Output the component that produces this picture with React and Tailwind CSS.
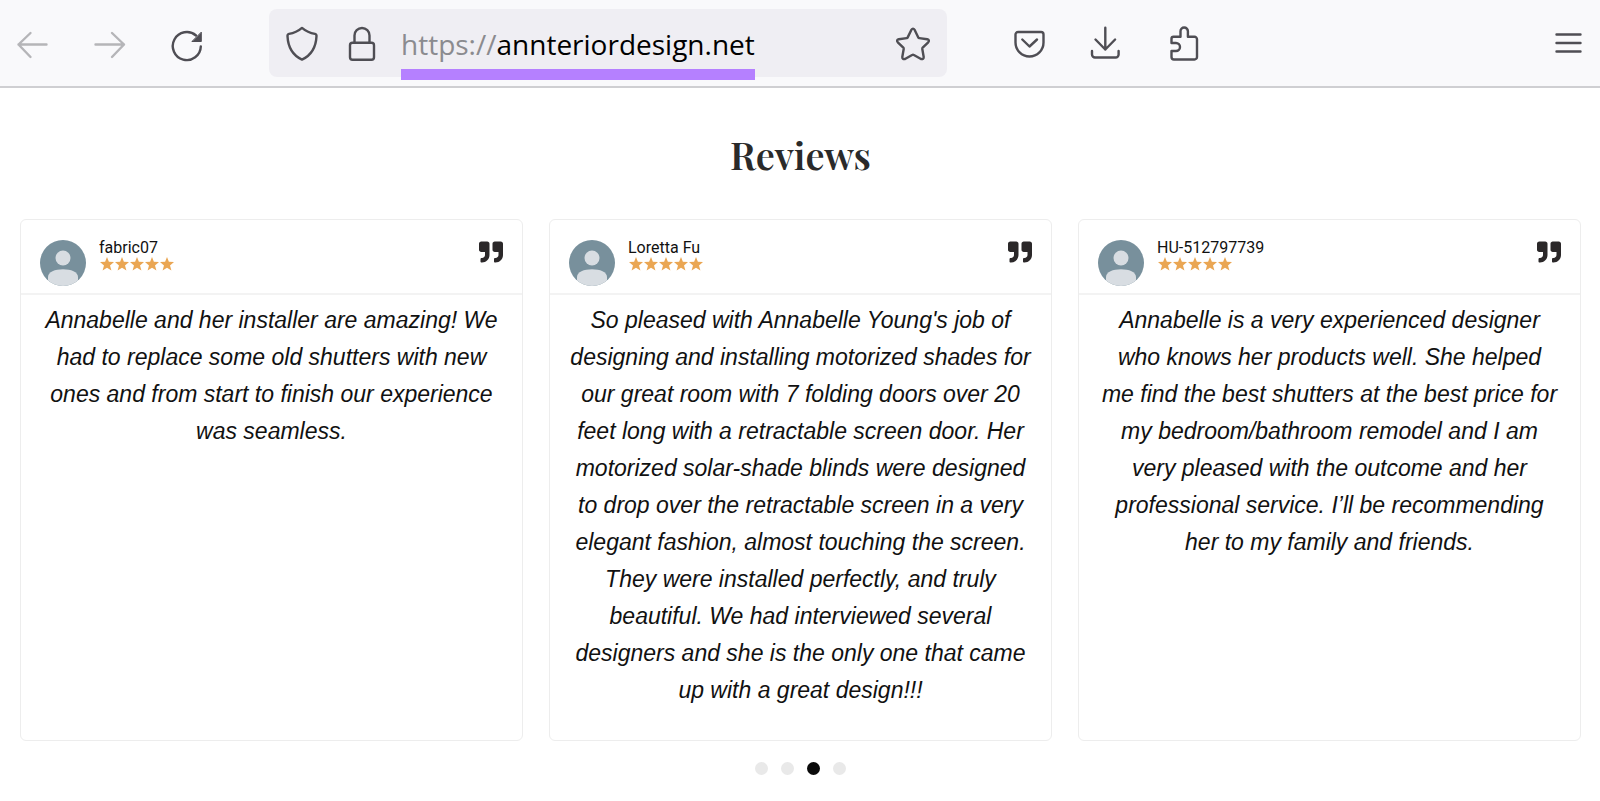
import React from "react";
import { FaQuoteRight } from "react-icons/fa";

const reviews = [
  {
    name: "fabric07",
    text: "Annabelle and her installer are amazing! We had to replace some old shutters with new ones and from start to finish our experience was seamless.",
  },
  {
    name: "Loretta Fu",
    text: "So pleased with Annabelle Young's job of designing and installing motorized shades for our great room with 7 folding doors over 20 feet long with a retractable screen door. Her motorized solar-shade blinds were designed to drop over the retractable screen in a very elegant fashion, almost touching the screen. They were installed perfectly, and truly beautiful. We had interviewed several designers and she is the only one that came up with a great design!!!",
  },
  {
    name: "HU-512797739",
    text: "Annabelle is a very experienced designer who knows her products well. She helped me\u00a0find the best shutters at the best price for my bedroom/bathroom remodel and I am very pleased with the outcome and her professional service. I’ll be recommending her to my family and friends.",
  },
];

function IconButton({ label, className = "text-[#4f4e54]", children }) {
  return (
    <button type="button" aria-label={label} className={"size-8 shrink-0 " + className}>
      <svg
        viewBox="0 0 32 32"
        className="size-8 overflow-visible"
        fill="none"
        stroke="currentColor"
        strokeWidth="2.4"
        strokeLinecap="round"
        strokeLinejoin="round"
        aria-hidden="true"
      >
        {children}
      </svg>
    </button>
  );
}

function Toolbar() {
  return (
    <header className="flex items-center border-b-2 border-[#cfcfd2] bg-[#f9f9fb] px-4 py-[9px]">
      <nav className="flex gap-[45px]" aria-label="History">
        <IconButton label="Back" className="text-[#b5b5b8]">
          <path d="M30.500 17.500H2.500M14.500 6 2.500 17.500 14.500 30" />
        </IconButton>
        <IconButton label="Forward" className="text-[#b5b5b8]">
          <path d="M2.500 17.500H31M19 6 31 17.500 19 30" />
        </IconButton>
        <IconButton label="Reload">
          <path d="M30.800 19.500A14 14 0 1 1 26 8.500" />
          <path d="M31.300 5.500v9h-9z" fill="currentColor" strokeWidth="1" />
        </IconButton>
      </nav>

      <div className="mx-[67px] flex h-[68px] w-[678px] items-center rounded-lg bg-[#efeef3] pr-[18px] pl-[17px]">
        <IconButton label="Tracking protection">
          <path d="M16 .9C12.500 3.900 8 6.100 3 6.900Q1.400 7.300 1.500 9.100C2 19.600 6.300 28.100 16 32.600C25.700 28.100 30 19.600 30.500 9.100Q30.600 7.300 29 6.900C24 6.100 19.500 3.900 16 .9Z" />
        </IconButton>
        <IconButton label="Site security" className="ml-7 text-[#4f4e54]">
          <rect x="4" y="15.700" width="24" height="17" rx="2.500" />
          <path d="M8.500 15.500V8.500a7.500 7.500 0 0 1 15 0v7" />
        </IconButton>
        <div className="relative ml-[23px] flex h-full items-center pt-0.5">
          <a
            href="https://annteriordesign.net"
            className="font-['Open_Sans',sans-serif] text-[28px] leading-9 whitespace-nowrap text-black"
          >
            <span className="text-[#8b8b8f]">https://</span>annteriordesign.net
          </a>
          <span className="absolute inset-x-0 -bottom-[3px] h-[11px] bg-[#b580ff]" />
        </div>
        <IconButton label="Bookmark this page" className="ml-auto text-[#4f4e54]">
          <path d="M14.300 2.900Q16 .4 17.700 2.900L21.300 10.400Q21.600 11 22.300 11.100L30.200 12.200Q33 13 31.200 15.300L25.700 20.700Q25.200 21.200 25.300 22L26.700 30Q26.700 32.700 24 32L16.900 28Q16 27.600 15.100 28L8 32Q5.300 32.700 5.300 30L6.700 22Q6.800 21.200 6.300 20.700L.8 15.300Q-1 13 1.800 12.200L9.700 11.100Q10.400 11 10.700 10.400Z" />
        </IconButton>
      </div>

      <div className="flex gap-11">
        <IconButton label="Save to Pocket">
          <path d="M4 5h23a2.500 2.500 0 0 1 2.500 2.500V15.500a14 14 0 0 1-28 0V7.500A2.500 2.500 0 0 1 4 5Z" />
          <path d="M8.300 12.500 15.500 19.500l7.500-7" />
        </IconButton>
        <IconButton label="Downloads">
          <path d="M15.300 .8V22.500M5.500 12.500l9.800 10 9.800-10M2 24v3.500a3 3 0 0 0 3 3h20.600a3 3 0 0 0 3-3V24" />
        </IconButton>
        <IconButton label="Extensions">
          <path d="M7.500 9.800H14.500V4.200a3.700 3.700 0 0 1 7.400 0V9.800H28.500a2.500 2.500 0 0 1 2.500 2.500V30a2.500 2.500 0 0 1-2.500 2.500H8A2.500 2.500 0 0 1 5.500 30V24H10a4 4 0 0 0 0-8H5.500V11.800a2 2 0 0 1 2-2Z" />
        </IconButton>
      </div>

      <IconButton label="Open menu" className="ml-auto text-[#4f4e54]">
        <path d="M4.500 7.500h24M4.500 16h24M4.500 24.500h24" />
      </IconButton>
    </header>
  );
}

function Avatar() {
  return (
    <svg viewBox="0 0 46 46" className="size-[46px] shrink-0" aria-hidden="true">
      <defs>
        <clipPath id="avatar-clip">
          <circle cx="23" cy="23" r="23" />
        </clipPath>
      </defs>
      <g clipPath="url(#avatar-clip)">
        <rect width="46" height="46" fill="#78909c" />
        <circle cx="23" cy="18" r="7.500" fill="#d8dde2" />
        <path d="M8 46V37C8 32 15 29.300 23 29.300S38 32 38 37V46Z" fill="#d8dde2" />
      </g>
    </svg>
  );
}

function Stars() {
  return (
    <div className="flex gap-px pt-px pl-px" role="img" aria-label="5 out of 5 stars">
      {[0, 1, 2, 3, 4].map((i) => (
        <svg key={i} viewBox="0 0 20 20" className="size-[14px]" fill="#eaa653" aria-hidden="true">
          <path d="M10 0l2.700 6.900 7.300.4-5.700 4.700 2 7.300-6.300-4.100-6.300 4.100 2-7.300L0 7.300l7.300-.4z" />
        </svg>
      ))}
    </div>
  );
}

function ReviewCard({ name, text }) {
  return (
    <article className="flex min-h-[522px] flex-col rounded-md border border-[#ededed] bg-white">
      <div className="flex items-start border-b-2 border-[#f3f3f3] px-[19px] pt-5 pb-[7px]">
        <Avatar />
        <div className="ml-[13px] flex flex-col">
          <h3 className="font-[Roboto,sans-serif] text-base leading-4 text-[#111]">{name}</h3>
          <Stars />
        </div>
        <FaQuoteRight className="ml-auto size-6 text-[#2b2829]" aria-hidden="true" />
      </div>
      <p className="px-[19px] pt-[7px] pb-[31px] text-center font-['Liberation_Sans',Arial,sans-serif] text-[23px] leading-[37px] text-[#111] italic">
        {text}
      </p>
    </article>
  );
}

export default function App() {
  return (
    <div className="min-h-screen bg-white">
      <Toolbar />
      <main className="pt-11 pr-[19px] pb-6 pl-5">
        <h1 className="text-center font-['Playfair_Display','Liberation_Serif',serif] text-[38px] leading-[46px] font-semibold text-[#2a2a2a]">
          Reviews
        </h1>
        <section className="mt-[41px] grid grid-cols-3 gap-[26px]" aria-label="Customer reviews">
          {reviews.map((r) => (
            <ReviewCard key={r.name} name={r.name} text={r.text} />
          ))}
        </section>
        <div className="mt-[21px] flex justify-center gap-[13px]">
          {[1, 2, 3, 4].map((n) => (
            <button
              key={n}
              type="button"
              aria-label={"Go to slide " + n}
              className={n === 3 ? "size-[13px] rounded-full bg-[#0a0a0a]" : "size-[13px] rounded-full bg-[#e9e9e9]"}
            />
          ))}
        </div>
      </main>
    </div>
  );
}
